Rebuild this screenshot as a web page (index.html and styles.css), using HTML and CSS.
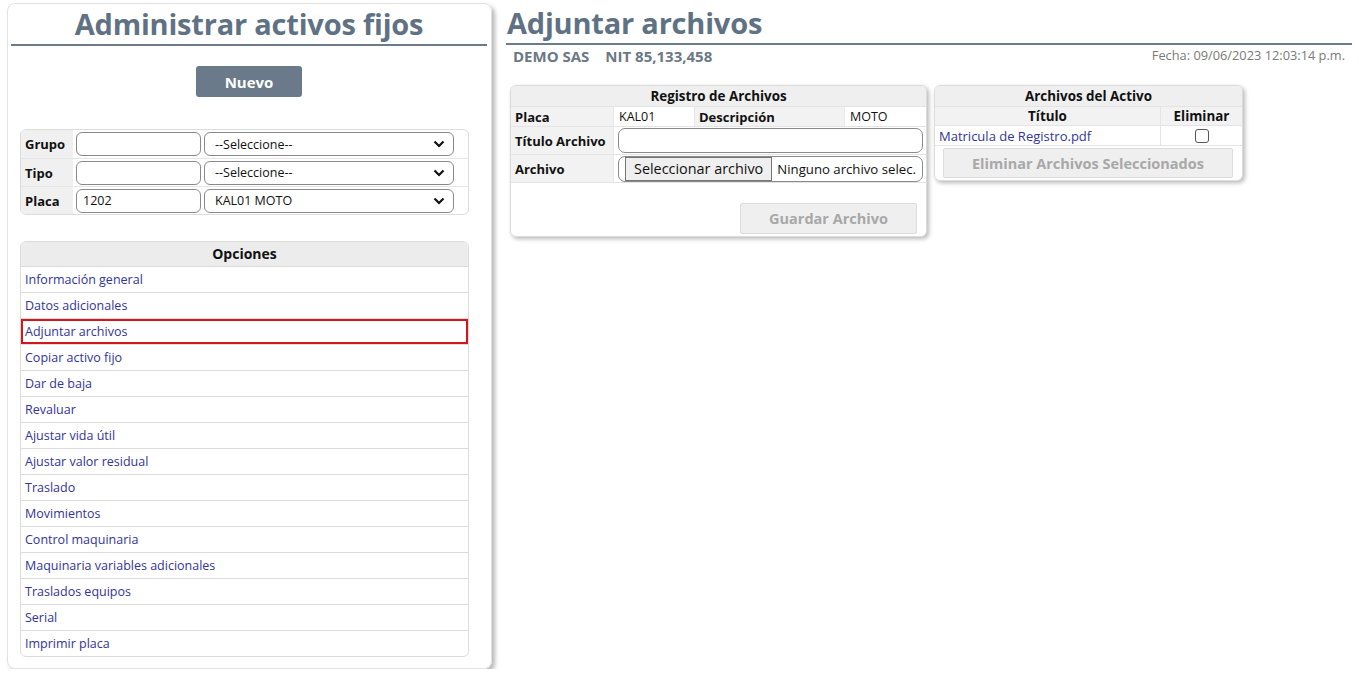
FILE: index.html
```html
<!DOCTYPE html>
<html lang="es">
<head>
<meta charset="utf-8">
<title>Adjuntar archivos</title>
<link rel="stylesheet" href="styles.css">
</head>
<body>
<div class="page">
  <aside class="left">
    <h1 class="ttl">Administrar activos fijos</h1>
    <div class="btnrow"><button class="nuevo">Nuevo</button></div>

    <div class="box filters">
      <div class="frow">
        <div class="flabel">Grupo</div>
        <div class="fcell">
          <div class="tin"></div>
          <div class="sel"><span>--Seleccione--</span><svg width="12" height="8" viewBox="0 0 12 8"><path d="M1.5 1.5 L6 6 L10.5 1.5" fill="none" stroke="#111" stroke-width="2.2"/></svg></div>
        </div>
      </div>
      <div class="frow">
        <div class="flabel">Tipo</div>
        <div class="fcell">
          <div class="tin"></div>
          <div class="sel"><span>--Seleccione--</span><svg width="12" height="8" viewBox="0 0 12 8"><path d="M1.5 1.5 L6 6 L10.5 1.5" fill="none" stroke="#111" stroke-width="2.2"/></svg></div>
        </div>
      </div>
      <div class="frow">
        <div class="flabel">Placa</div>
        <div class="fcell">
          <div class="tin">1202</div>
          <div class="sel"><span>KAL01 MOTO</span><svg width="12" height="8" viewBox="0 0 12 8"><path d="M1.5 1.5 L6 6 L10.5 1.5" fill="none" stroke="#111" stroke-width="2.2"/></svg></div>
        </div>
      </div>
    </div>

    <div class="box opts">
      <div class="ohead">Opciones</div>
      <a class="orow">Información general</a>
      <a class="orow">Datos adicionales</a>
      <a class="orow active">Adjuntar archivos</a>
      <a class="orow">Copiar activo fijo</a>
      <a class="orow">Dar de baja</a>
      <a class="orow">Revaluar</a>
      <a class="orow">Ajustar vida útil</a>
      <a class="orow">Ajustar valor residual</a>
      <a class="orow">Traslado</a>
      <a class="orow">Movimientos</a>
      <a class="orow">Control maquinaria</a>
      <a class="orow">Maquinaria variables adicionales</a>
      <a class="orow">Traslados equipos</a>
      <a class="orow">Serial</a>
      <a class="orow">Imprimir placa</a>
    </div>
  </aside>

  <main class="main">
    <h1 class="ttl2">Adjuntar archivos</h1>
    <div class="company">
      <div class="cname"><span>DEMO SAS</span><span>NIT 85,133,458</span></div>
      <div class="fecha">Fecha: 09/06/2023 12:03:14 p.m.</div>
    </div>

    <div class="panels">
      <section class="panel reg">
        <div class="phead">Registro de Archivos</div>
        <div class="rrow r1">
          <div class="rl">Placa</div>
          <div class="rv c2">KAL01</div>
          <div class="rl c3">Descripción</div>
          <div class="rv c4">MOTO</div>
        </div>
        <div class="rrow r2">
          <div class="rl">Título Archivo</div>
          <div class="rv wide"><div class="tinput"></div></div>
        </div>
        <div class="rrow r2">
          <div class="rl">Archivo</div>
          <div class="rv wide">
            <div class="finput"><span class="fbtn">Seleccionar archivo</span><span class="ftxt">Ninguno archivo selec.</span></div>
          </div>
        </div>
        <div class="rfoot"><button class="dis gbtn">Guardar Archivo</button></div>
      </section>

      <section class="panel arch">
        <div class="phead">Archivos del Activo</div>
        <div class="arow ahead">
          <div class="a1">Título</div>
          <div class="a2">Eliminar</div>
        </div>
        <div class="arow adata">
          <div class="a1"><a class="lnk">Matricula de Registro.pdf</a></div>
          <div class="a2"><span class="chk"></span></div>
        </div>
        <div class="afoot"><button class="dis ebtn">Eliminar Archivos Seleccionados</button></div>
      </section>
    </div>
  </main>
</div>
</body>
</html>
```

FILE: styles.css
```css
* { box-sizing: border-box; }
html, body { margin: 0; padding: 0; background: #fff; }
body {
  font-family: "Open Sans", "Noto Sans", "DejaVu Sans", sans-serif;
  font-size: 12px;
  color: #111;
}
.page {
  display: flex;
  align-items: flex-start;
  padding: 3px 7px 0 7px;
}

/* ---------- left panel ---------- */
.left {
  width: 485px;
  height: 666px;
  border: 1px solid #e2e2e2;
  border-radius: 8px;
  box-shadow: 3px 3px 4px rgba(0,0,0,0.28);
  padding: 0 4px 0 3px;
  flex: none;
}
.ttl {
  margin: 0;
  text-align: center;
  font-size: 29px;
  font-weight: 700;
  color: #5f7284;
  line-height: 40px;
  height: 42px;
  border-bottom: 2px solid #6b7b8a;
  letter-spacing: -0.2px;
}
.btnrow {
  display: flex;
  justify-content: center;
  padding-top: 20px;
}
.nuevo {
  width: 106px;
  height: 31px;
  border: 0;
  border-radius: 3px;
  background: #6a7a8b;
  color: #fff;
  font-family: inherit;
  font-weight: 700;
  font-size: 15px;
}
.box {
  border: 1px solid #dcdcdc;
  border-radius: 6px;
  overflow: hidden;
  margin-left: 9px;
  width: 449px;
}
.filters { margin-top: 32px; }
.frow {
  display: flex;
  height: 28px;
  border-top: 1px solid #e6e6e6;
}
.frow:first-child { border-top: 0; }
.flabel {
  width: 52px;
  background: #f0f0f0;
  font-weight: 700;
  font-size: 13px;
  padding-left: 4px;
  display: flex;
  align-items: center;
  flex: none;
}
.fcell {
  display: flex;
  align-items: center;
  gap: 3px;
  padding-left: 3px;
}
.tin {
  width: 125px;
  height: 24px;
  border: 1px solid #8a8a8a;
  border-radius: 6px;
  padding-left: 6px;
  font-size: 12.5px;
  line-height: 22px;
}
.sel {
  width: 250px;
  height: 24px;
  border: 1px solid #8a8a8a;
  border-radius: 6px;
  padding: 0 8px 0 10px;
  display: flex;
  align-items: center;
  justify-content: space-between;
  font-size: 12.5px;
}
.opts { margin-top: 26px; }
.ohead {
  height: 24px;
  background: #ececec;
  text-align: center;
  font-weight: 700;
  font-size: 14px;
  line-height: 24px;
}
.orow {
  display: block;
  height: 26px;
  border-top: 1px solid #dcdcdc;
  padding-left: 4px;
  line-height: 25px;
  color: #32349a;
  font-size: 12.5px;
  cursor: pointer;
}
.orow.active {
  box-shadow: inset 0 0 0 2px #d3161c;
}

/* ---------- main ---------- */
.main {
  flex: 1;
  margin-left: 14px;
  max-width: 846px;
}
.ttl2 {
  margin: 0;
  font-size: 29px;
  font-weight: 700;
  color: #5f7284;
  line-height: 40px;
  height: 42px;
  border-bottom: 2px solid #6b7b8a;
  padding-left: 1px;
  letter-spacing: -0.2px;
}
.company {
  display: flex;
  justify-content: space-between;
  align-items: flex-start;
  height: 40px;
}
.cname {
  display: flex;
  gap: 16px;
  padding-left: 7px;
  font-weight: 700;
  font-size: 15px;
  color: #6b7886;
  line-height: 22px;
}
.fecha {
  font-size: 12.8px;
  color: #7a7a7a;
  padding-right: 7px;
  line-height: 20px;
}
.panels {
  display: flex;
  gap: 7px;
  align-items: flex-start;
  padding-left: 4px;
}
.panel {
  border: 1px solid #dcdcdc;
  border-radius: 6px;
  box-shadow: 2px 2px 4px rgba(0,0,0,0.28);
  overflow: hidden;
  background: #fff;
}
.phead {
  height: 20px;
  background: #efefef;
  text-align: center;
  font-weight: 700;
  font-size: 13.4px;
  line-height: 20px;
}
.reg { width: 417px; }
.rrow {
  display: flex;
  border-top: 1px solid #e4e4e4;
}
.r1 { height: 20px; }
.r2 { height: 28px; }
.rl {
  width: 102px;
  flex: none;
  background: #f2f2f2;
  font-weight: 700;
  font-size: 13px;
  padding-left: 4px;
  display: flex;
  align-items: center;
}
.rv {
  display: flex;
  align-items: center;
  font-size: 12.5px;
  padding-left: 5px;
  border-left: 1px solid #e8e8e8;
}
.c2 { width: 81px; }
.rl.c3 { width: 150px; border-left: 1px solid #e8e8e8; }
.c4 { flex: 1; }
.wide { flex: 1; padding-left: 4px; padding-right: 3px; }
.tinput {
  width: 100%;
  height: 25px;
  border: 1px solid #8a8a8a;
  border-radius: 7px;
}
.finput {
  width: 100%;
  height: 26px;
  border: 1px solid #8a8a8a;
  border-radius: 7px;
  display: flex;
  align-items: center;
  padding-left: 6px;
  gap: 5px;
  overflow: hidden;
}
.fbtn {
  height: 24px;
  border: 1px solid #767676;
  background: #efefef;
  padding: 0 8px;
  font-size: 14.4px;
  line-height: 22px;
  color: #111;
  white-space: nowrap;
}
.ftxt { font-size: 13.2px; white-space: nowrap; }
.rfoot {
  border-top: 1px solid #e4e4e4;
  height: 54px;
  display: flex;
  justify-content: flex-end;
  align-items: flex-end;
  padding: 0 9px 2px 0;
}
.dis {
  border: 1px solid #dcdcdc;
  background: #efefef;
  color: #a8a8a8;
  font-family: inherit;
  font-weight: 700;
  font-size: 14.5px;
  border-radius: 2px;
}
.gbtn { width: 177px; height: 31px; }

.arch { width: 309px; }
.arow { display: flex; border-top: 1px solid #e4e4e4; }
.ahead { height: 19px; background: #f2f2f2; font-weight: 700; font-size: 13.4px; }
.adata { height: 20px; }
.a1 { width: 225px; display: flex; align-items: center; justify-content: center; }
.a2 { flex: 1; display: flex; align-items: center; justify-content: center; border-left: 1px solid #e4e4e4; }
.adata .a1 { justify-content: flex-start; padding-left: 4px; }
.lnk { color: #32349a; font-size: 13px; }
.chk {
  width: 14px;
  height: 14px;
  border: 1px solid #555;
  border-radius: 3px;
  display: block;
}
.afoot {
  border-top: 1px solid #e4e4e4;
  height: 35px;
  padding: 2px 8px 0 8px;
}
.ebtn { width: 290px; height: 30px; }
```
